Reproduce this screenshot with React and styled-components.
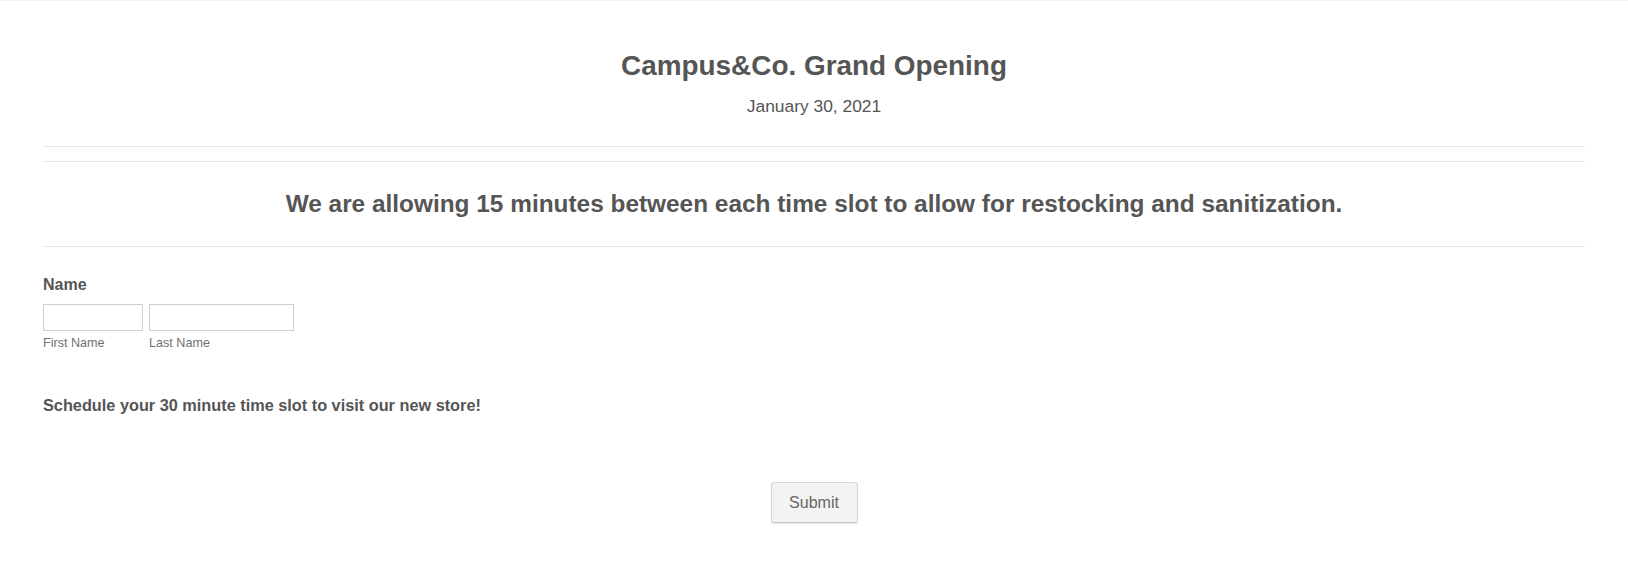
import React from 'react';
import styled, { createGlobalStyle } from 'styled-components';

const GlobalStyle = createGlobalStyle`
  html, body {
    margin: 0;
    padding: 0;
    background: #fff;
  }
  body {
    font-family: "Liberation Sans", Arial, sans-serif;
    color: #555555;
  }
`;

const Page = styled.div`
  border-top: 1px solid #f0f0f0;
  min-height: 564px;
`;

const Form = styled.form`
  padding: 0 43px;
`;

const Header = styled.div`
  text-align: center;
  padding: 49px 0 30px;
  border-bottom: 1px solid #e6e6e6;
`;

const Title = styled.h1`
  margin: 0;
  font-size: 27.9px;
  line-height: 32px;
  font-weight: 700;
`;

const Subtitle = styled.div`
  margin-top: 14px;
  font-size: 17.4px;
  line-height: 20px;
`;

const Notice = styled.div`
  margin-top: 14px;
  padding: 27px 0 27px;
  border-top: 1px solid #e6e6e6;
  border-bottom: 1px solid #e6e6e6;
  text-align: center;
`;

const NoticeText = styled.h2`
  margin: 0;
  font-size: 24.4px;
  line-height: 30px;
  font-weight: 700;
`;

const Field = styled.div`
  margin-top: 28px;
`;

const Label = styled.label`
  display: block;
  font-size: 16px;
  line-height: 20px;
  font-weight: 700;
`;

const Inputs = styled.div`
  display: flex;
  gap: 6px;
  margin-top: 9px;
`;

const InputCol = styled.div`
  display: flex;
  flex-direction: column;
`;

const TextInput = styled.input`
  box-sizing: border-box;
  width: ${(p) => p.$w}px;
  height: 27px;
  margin: 0;
  padding: 0 4px;
  border: 1px solid #cfcfcf;
  border-radius: 0;
  background: #fff;
  font-family: inherit;
  font-size: 14px;
  outline: none;
`;

const SubLabel = styled.span`
  margin-top: 4px;
  font-size: 12.6px;
  line-height: 16px;
  color: #6f6f6f;
`;

const Text = styled.p`
  margin: 44px 0 0;
  font-size: 16.3px;
  line-height: 20px;
  font-weight: 700;
`;

const ButtonRow = styled.div`
  display: flex;
  justify-content: center;
  margin-top: 67px;
`;

const SubmitButton = styled.button`
  box-sizing: border-box;
  width: 87px;
  height: 41px;
  border: 1px solid #d6d6d6;
  border-bottom-color: #c4c4c4;
  border-radius: 3px;
  background: #f3f3f3;
  box-shadow: 0 1px 1px rgba(0, 0, 0, 0.1);
  color: #666666;
  font-family: inherit;
  font-size: 16px;
  cursor: pointer;
`;

export default function App() {
  return (
    <Page>
      <GlobalStyle />
      <Form onSubmit={(e) => e.preventDefault()}>
        <Header>
          <Title>Campus&amp;Co. Grand Opening</Title>
          <Subtitle>January 30, 2021</Subtitle>
        </Header>

        <Notice>
          <NoticeText>
            We are allowing 15 minutes between each time slot to allow for restocking and sanitization.
          </NoticeText>
        </Notice>

        <Field>
          <Label>Name</Label>
          <Inputs>
            <InputCol>
              <TextInput $w={100} type="text" />
              <SubLabel>First Name</SubLabel>
            </InputCol>
            <InputCol>
              <TextInput $w={145} type="text" />
              <SubLabel>Last Name</SubLabel>
            </InputCol>
          </Inputs>
        </Field>

        <Text>Schedule your 30 minute time slot to visit our new store!</Text>

        <ButtonRow>
          <SubmitButton type="submit">Submit</SubmitButton>
        </ButtonRow>
      </Form>
    </Page>
  );
}
